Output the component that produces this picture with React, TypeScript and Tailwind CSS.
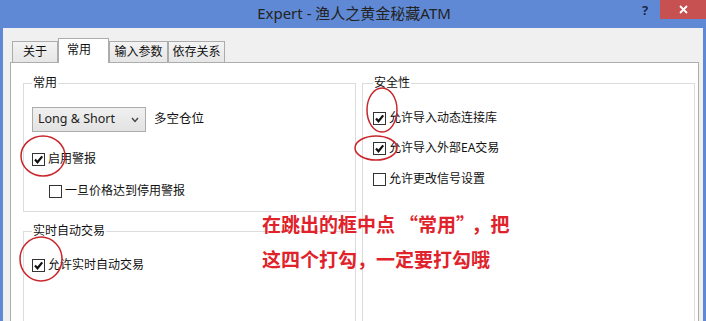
import React from 'react';

const UI = '"Noto Sans", "Noto Sans CJK SC", sans-serif';

function Check({ checked = false, label }: { checked?: boolean; label: string }) {
  return (
    <div className="flex items-center h-[16px] gap-[3px]">
      <span className="w-[13px] h-[13px] border border-[#333] bg-white flex items-center justify-center">
        {checked && (
          <svg width="11" height="11" viewBox="0 0 11 11">
            <path d="M2 5.5 L4.5 8.2 L9.2 2.4" fill="none" stroke="#111" strokeWidth="2.2" />
          </svg>
        )}
      </span>
      <span className="text-[12px] leading-[16px] text-[#111]">{label}</span>
    </div>
  );
}

function Group({ title, className, children }: { title: string; className: string; children: React.ReactNode }) {
  return (
    <fieldset className={`border border-[#dcdcdc] ${className}`}>
      <legend className="px-[1px] text-[12px] leading-[16px] text-[#111]">{title}</legend>
      {children}
    </fieldset>
  );
}

const tabs = [
  { label: '关于', w: 'w-[46px]' },
  { label: '常用', w: 'w-[51px]', active: true },
  { label: '输入参数', w: 'w-[59px]' },
  { label: '依存关系', w: 'w-[57px]' },
];

export default function App() {
  return (
    <div className="relative w-[706px] h-[321px] overflow-hidden bg-[#6089d5] flex flex-col" style={{ fontFamily: UI }}>
      {/* title bar */}
      <div className="relative h-[28px] flex items-center justify-center shrink-0">
        <span className="text-[15px] leading-[20px] text-[#222] -mt-[2px] ml-[2px]">Expert - 渔人之黄金秘藏ATM</span>
        <span className="absolute left-[642px] top-[1px] text-[13px] font-bold text-[#1c2a4a]">?</span>
        <div className="absolute left-[660px] top-0 w-[46px] h-[19px] bg-[#c75050] flex items-center justify-center">
          <svg width="9" height="9" viewBox="0 0 9 9">
            <path d="M1 1 L8 8 M8 1 L1 8" stroke="#fff" strokeWidth="1.8" />
          </svg>
        </div>
      </div>

      {/* client area */}
      <div className="flex-1 mx-[3px] bg-[#f0f0f0] pt-[10px] pl-[7px] pr-[4px] flex flex-col">
        <div className="flex items-end pl-[2px] h-[24px]">
          {tabs.map((t) =>
            t.active ? (
              <div
                key={t.label}
                className={`${t.w} h-[25px] -mb-px relative z-10 bg-white border border-b-0 border-[#acacac] text-[12px] pl-[8px] pt-[2px] text-[#111]`}
              >
                {t.label}
              </div>
            ) : (
              <div
                key={t.label}
                className={`${t.w} h-[21px] bg-gradient-to-b from-[#f3f3f3] to-[#e6e6e6] border border-b-0 border-[#acacac] text-[12px] flex items-center justify-center text-[#111]`}
              >
                {t.label}
              </div>
            )
          )}
        </div>

        <div className="flex-1 bg-white border border-[#acacac] pt-[12px] pl-[12px] flex gap-[6px]">
          <div className="flex flex-col gap-[11px]">
            <Group title="常用" className="w-[333px] pl-[8px] pt-[16px] pb-[12px]">
              <div className="flex items-center gap-[8px]">
                <div className="w-[114px] h-[25px] border border-[#acacac] bg-gradient-to-b from-[#f0f0f0] to-[#e3e3e3] flex items-center justify-between pl-[5px] pr-[6px]">
                  <span className="text-[12.5px] text-[#222]">Long &amp; Short</span>
                  <svg width="8" height="6" viewBox="0 0 8 6">
                    <path d="M1 1 L4 4.5 L7 1" fill="none" stroke="#444" strokeWidth="1.4" />
                  </svg>
                </div>
                <span className="text-[12.5px] text-[#111]">多空仓位</span>
              </div>
              <div className="mt-[19px]">
                <Check checked label="启用警报" />
              </div>
              <div className="mt-[16px] pl-[17px]">
                <Check label="一旦价格达到停用警报" />
              </div>
            </Group>
            <Group title="实时自动交易" className="w-[333px] h-[200px] pl-[8px] pt-[18px]">
              <Check checked label="允许实时自动交易" />
            </Group>
          </div>

          <Group title="安全性" className="w-[333px] h-[300px] pl-[10px] pt-[19px]">
            <Check checked label="允许导入动态连接库" />
            <div className="mt-[14px]">
              <Check checked label="允许导入外部EA交易" />
            </div>
            <div className="mt-[15px]">
              <Check label="允许更改信号设置" />
            </div>
          </Group>
        </div>
      </div>

      {/* annotation overlay */}
      <div
        className="absolute left-[262px] top-[206px] text-[19px] leading-[35px] font-bold text-[#e0222b] whitespace-nowrap"
        style={{ fontFamily: '"Noto Sans CJK SC", sans-serif' }}
      >
        <div>
          在跳出的框中点<span className="ml-[4px]">“</span>常用”<span className="ml-[6px]">，</span>把
        </div>
        <div>这四个打勾，一定要打勾哦</div>
      </div>
      <svg className="absolute inset-0 pointer-events-none" width="706" height="321">
        <g fill="none" stroke="#c9252b" strokeWidth="1.5">
          <ellipse cx="43" cy="156" rx="22" ry="20" />
          <ellipse cx="41" cy="259" rx="21" ry="22" />
          <ellipse cx="382" cy="110" rx="15" ry="22" />
          <ellipse cx="376" cy="148" rx="21" ry="12" />
        </g>
      </svg>
    </div>
  );
}
